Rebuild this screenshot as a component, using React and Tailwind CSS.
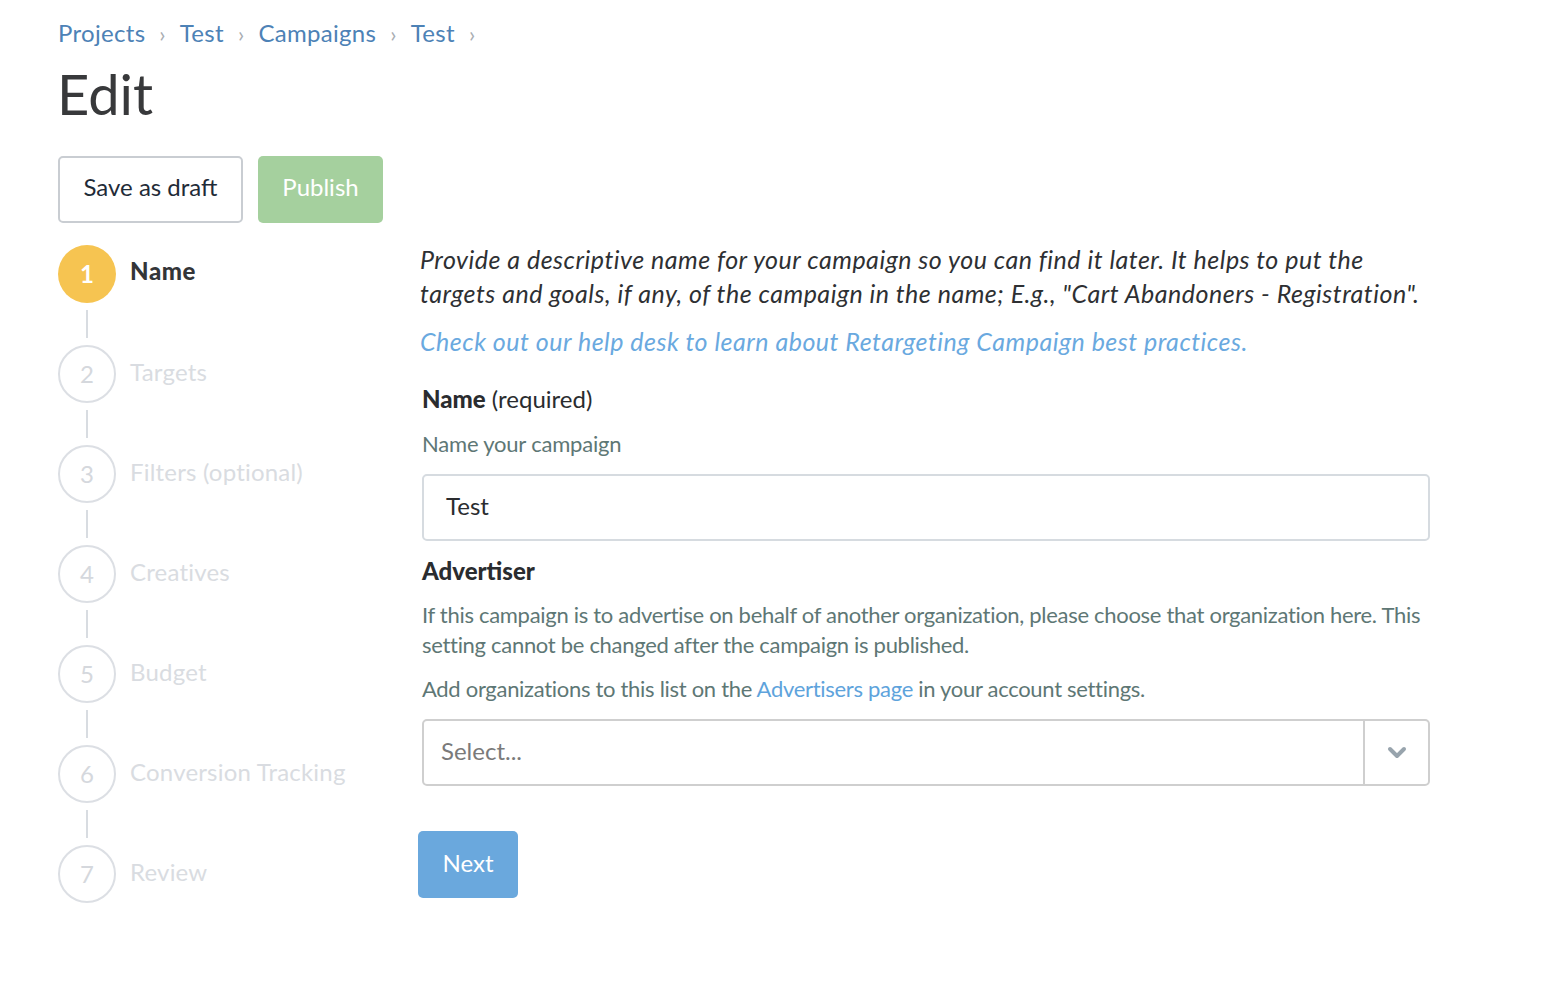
const steps = [
  "Name",
  "Targets",
  "Filters (optional)",
  "Creatives",
  "Budget",
  "Conversion Tracking",
  "Review",
];

function Stepper() {
  return (
    <div className="flex flex-col">
      {steps.map((label, i) => (
        <div key={label} className="flex flex-col">
          {i > 0 && <div className="ml-[28px] h-[28px] w-[2px] bg-[#d8dce1] my-[7px]" />}
          <div className="flex items-center gap-[14px]">
            {i === 0 ? (
              <div className="w-[58px] h-[58px] rounded-full bg-[#f6c451] flex items-center justify-center text-white text-[24px] font-bold">
                1
              </div>
            ) : (
              <div className="w-[58px] h-[58px] rounded-full border-2 border-[#dcdfe4] flex items-center justify-center text-[#d5d8dd] text-[24px]">
                {i + 1}
              </div>
            )}
            <span
              className={
                i === 0
                  ? "text-[24px] font-black tracking-[0.6px] text-[#333538] -mt-[6px]"
                  : "text-[24px] tracking-[0.2px] text-[#d9dce1] -mt-[4px]"
              }
            >
              {label}
            </span>
          </div>
        </div>
      ))}
    </div>
  );
}

const Sep = () => <span className="text-[#a9adb2] text-[22px] mx-[14px]">›</span>;

export default function App() {
  return (
    <div className="min-h-screen bg-white font-['Lato',sans-serif] pl-[58px] pt-[16px]">
      {/* Breadcrumbs */}
      <div className="flex items-center text-[24px] tracking-[0.3px] text-[#4d82b6] h-[34px]">
        <span>Projects</span>
        <Sep />
        <span>Test</span>
        <Sep />
        <span>Campaigns</span>
        <Sep />
        <span>Test</span>
        <Sep />
      </div>
      <h1 className="text-[56px] leading-[76px] text-[#38393b] mt-[6px] -ml-[1px]">Edit</h1>

      <div className="flex gap-[15px] mt-[24px]">
        <button className="h-[67px] w-[185px] border-2 border-[#c9cdd2] rounded-[5px] text-[24px] text-[#1f2b38] bg-white pb-[6px]">
          Save as draft
        </button>
        <button className="h-[67px] w-[125px] rounded-[5px] text-[24px] text-white bg-[#a5d09e] pb-[6px]">
          Publish
        </button>
      </div>

      <div className="flex mt-[22px]">
        <div className="w-[362px] shrink-0">
          <Stepper />
        </div>

        <div className="w-[1010px]">
          <p className="italic text-[25px] leading-[34px] text-[#2e3033] tracking-[0.5px] mt-[-3px]">
            Provide a descriptive name for your campaign so you can find it later. It helps to put the targets and goals, if any, of the campaign in the name; E.g., "Cart Abandoners - Registration".
          </p>
          <p className="italic text-[25px] leading-[34px] text-[#6aa9df] tracking-[0.5px] mt-[14px]">
            Check out our help desk to learn about Retargeting Campaign best practices.
          </p>

          <div className="pl-[2px]">
            <div className="mt-[26px] text-[24px] leading-[30px] text-[#2a2c2f]">
              <span className="font-black">Name</span> (required)
            </div>
            <div className="mt-[15px] text-[22px] leading-[30px] tracking-[-0.2px] text-[#5e7775]">
              Name your campaign
            </div>
            <div className="mt-[15px] h-[67px] border-2 border-[#d6dbe0] rounded-[5px] flex items-center px-[22px] text-[24px] text-[#2a2c2f] pb-[4px]">
              Test
            </div>

            <div className="mt-[15px] text-[24px] leading-[30px] font-black text-[#2a2c2f]">
              Advertiser
            </div>
            <p className="mt-[14px] text-[22px] leading-[30px] tracking-[-0.3px] text-[#5e7775]">
              If this campaign is to advertise on behalf of another organization, please choose that organization here. This setting cannot be changed after the campaign is published.
            </p>
            <p className="mt-[14px] text-[22px] leading-[30px] tracking-[-0.3px] text-[#5e7775]">
              Add organizations to this list on the <span className="text-[#5ea3dc]">Advertisers page</span> in your account settings.
            </p>
            <div className="mt-[15px] h-[67px] border-2 border-[#cfcfcf] rounded-[5px] flex items-stretch">
              <div className="flex-1 flex items-center px-[17px] text-[24px] text-[#7a7a7a] pb-[4px]">Select...</div>
              <div className="w-[65px] border-l-2 border-[#cfcfcf] flex items-center justify-center">
                <svg width="20" height="14" viewBox="0 0 20 14">
                  <path d="M3 3 L10 10 L17 3" fill="none" stroke="#98a4ad" strokeWidth="4" strokeLinecap="round" strokeLinejoin="round" />
                </svg>
              </div>
            </div>
          </div>

          <button className="mt-[45px] h-[67px] w-[100px] rounded-[5px] bg-[#6aa8dd] text-white text-[24px] -ml-[2px] pb-[4px]">
            Next
          </button>
        </div>
      </div>
    </div>
  );
}
